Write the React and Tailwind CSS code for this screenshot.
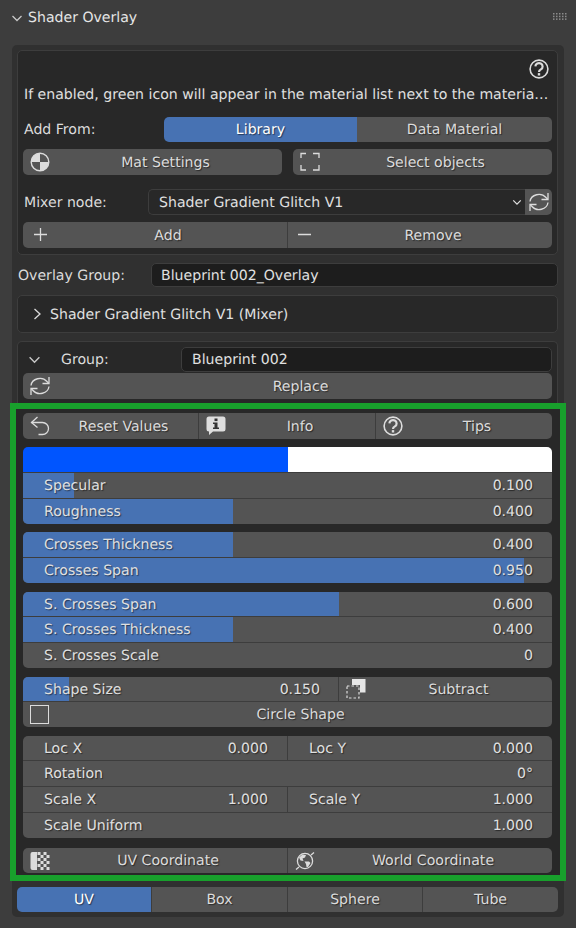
import React from "react";

const ICON = "#dcdcdc";

function Sphere() {
  return (
    <svg width="20" height="20" viewBox="0 0 20 20" className="shrink-0">
      <circle cx="10" cy="10" r="8.8" fill="#545454" stroke={ICON} strokeWidth="1.4" />
      <path d="M10 10V1.2A8.8 8.8 0 0 0 1.2 10Z" fill={ICON} />
      <path d="M10 10v8.8A8.8 8.8 0 0 0 18.8 10Z" fill={ICON} />
    </svg>
  );
}
function Select() {
  return (
    <svg width="20" height="20" viewBox="0 0 20 20" fill="none" stroke={ICON} strokeWidth="1.3" className="shrink-0">
      <path d="M1 6V1.5h5M13 1.5h6V6M1 13v5h5M13 18h6v-5" />
    </svg>
  );
}
function Refresh() {
  return (
    <svg width="20" height="20" viewBox="0 0 20 20" fill="none" stroke={ICON} strokeWidth="1.3" className="shrink-0">
      <path d="M1 9.5A9 8 0 0 1 17 5.5L18.5 7" />
      <path d="M19 1V7.5H12.5" />
      <path d="M19 10.5A9 8 0 0 1 3 14.5L1.5 13" />
      <path d="M1 19V12.5H7.5" />
    </svg>
  );
}
function Undo() {
  return (
    <svg width="20" height="20" viewBox="0 0 20 20" fill="none" stroke={ICON} strokeWidth="1.3" className="shrink-0">
      <path d="M7.5 1L1.5 6.5L7.5 11.5" />
      <path d="M1.5 6.5H12.5A6 6 0 0 1 12.5 18.5H8.5" />
    </svg>
  );
}
function Info() {
  return (
    <svg width="20" height="20" viewBox="0 0 20 20" className="shrink-0">
      <path d="M3 0.5H17A2.5 2.5 0 0 1 19.5 3V13A2.5 2.5 0 0 1 17 15.5H7L3 19V15.5A2.5 2.5 0 0 1 0.5 13V3A2.5 2.5 0 0 1 3 0.5Z" fill="#dedede" />
      <rect x="8.5" y="2.5" width="3" height="2.6" fill="#333" />
      <path d="M7 6.5H11.5V11.5H13V13H7V11.5H8.5V8H7Z" fill="#333" />
    </svg>
  );
}
function Help() {
  return (
    <svg width="20" height="20" viewBox="0 0 20 20" fill="none" stroke={ICON} className="shrink-0">
      <circle cx="10" cy="10" r="8.9" strokeWidth="1.6" />
      <path d="M6.4 7.4A3.6 3.4 0 1 1 11.9 10.4C10.7 11.1 10 11.6 10 12.9" strokeWidth="2.2" />
      <rect x="8.8" y="14.1" width="2.4" height="2.4" fill={ICON} stroke="none" />
    </svg>
  );
}
function Subtract() {
  return (
    <svg width="20" height="20" viewBox="0 0 20 20" fill="none" className="shrink-0">
      <path d="M6 0H19.5V13.5H14V6H6Z" fill="#e6e6e6" />
      <rect x="1" y="7" width="12" height="12" stroke={ICON} strokeWidth="1.2" strokeDasharray="2.5 2" />
    </svg>
  );
}
function UvIcon() {
  const cells = [];
  for (let r = 0; r < 6; r++) {
    for (let c = 0; c < 4; c++) {
      if ((r + c) % 2 === 0) cells.push(<rect key={r + "-" + c} x={7.5 + c * 3} y={1 + r * 3} width="3" height="3" fill={ICON} />);
    }
  }
  return (
    <svg width="20" height="20" viewBox="0 0 20 20" className="shrink-0">
      <path d="M2.5 1H7V19H2.5A2 2 0 0 1 0.5 17V3A2 2 0 0 1 2.5 1Z" fill={ICON} />
      {cells}
    </svg>
  );
}
function World() {
  return (
    <svg width="20" height="20" viewBox="0 0 20 20" fill="none" className="shrink-0">
      <circle cx="10" cy="10" r="7.6" stroke={ICON} strokeWidth="1.3" />
      <path d="M4 6.5L7.5 3.5L11 4L10 6.5L7.5 7.5L8.5 10L5.5 9.5Z" fill={ICON} />
      <path d="M9.5 10.5L14 10.5L15.5 12L13 16L11.5 16L11 13Z" fill={ICON} />
      <path d="M1 18.5L4 16M16 4L19 1.5" stroke={ICON} strokeWidth="1.3" />
    </svg>
  );
}
function Chevron({ dir = "down", w = 12, h = 12, color = "#c8c8c8", sw = 1.3 }) {
  const d = dir === "down" ? "M1.5 4L6 8.5L10.5 4" : "M3.5 1L9 6L3.5 11";
  return (
    <svg width={w} height={h} viewBox="0 0 12 12" fill="none" stroke={color} strokeWidth={sw} className="shrink-0">
      <path d={d} />
    </svg>
  );
}
function Grip() {
  const dots = [];
  for (let y = 0; y < 3; y++) for (let x = 0; x < 5; x++) dots.push(<rect key={x + "-" + y} x={x * 3} y={y * 2.7} width="1.5" height="1.5" fill="#8c8c8c" />);
  return (
    <svg width="14" height="7" viewBox="0 0 14 7" className="shrink-0">
      {dots}
    </svg>
  );
}

const shadow = "[text-shadow:1px_1px_1px_rgba(0,0,0,0.5)]";

function Btn({ icon, active, children, className = "", iconClass = "top-[3px]" }) {
  return (
    <div
      className={
        "relative flex items-center justify-center " +
        (active ? "bg-[#4772b3] text-white " : "bg-[#545454] text-[#dcdcdc] ") +
        (icon ? "pl-[26px] " : "") +
        shadow + " " + className
      }
    >
      {icon && <span className={"absolute left-[7px] flex " + iconClass}>{icon}</span>}
      <span className="pt-[2px]">{children}</span>
    </div>
  );
}

function Slider({ label, value, fill = "", className = "" }) {
  return (
    <div className={"relative flex items-center justify-between pl-[21px] pr-[19px] bg-[#545454] text-[#e0e0e0] " + shadow + " " + className}>
      {fill && <div className={"absolute left-0 top-0 bottom-0 bg-[#4772b3] " + fill} />}
      <span className="relative pt-[2px]">{label}</span>
      <span className="relative pt-[2px]">{value}</span>
    </div>
  );
}

function Sep() {
  return <div className="h-px bg-[#3d3d3d] shrink-0" />;
}

export default function App() {
  return (
    <div className="w-[576px] h-[928px] overflow-hidden bg-[#3d3d3d] text-[14.1px] leading-none text-[#dcdcdc] font-['DejaVu_Sans',sans-serif] [text-rendering:geometricPrecision]">
      {/* header */}
      <div className="h-[45px] flex items-center pl-[11px] pr-[9px] pb-[10px]">
        <Chevron w={12} h={12} color="#c8c8c8" />
        <span className="ml-[5px] pt-[2px] text-[#e6e6e6]">Shader Overlay</span>
        <span className="ml-auto -mt-[3px] flex"><Grip /></span>
      </div>

      {/* panel */}
      <div className="ml-[12px] w-[552px] h-[872px] rounded-[5px] bg-[#303030] pl-[5px] pr-[6px] pt-[5px]">
        {/* box 1 */}
        <div className="h-[205px] rounded-[5px] border border-[#3d3d3d] bg-[#282828] px-[5px] flex flex-col">
          <div className="flex justify-end pt-[8px] pr-[3px] h-[36px]"><Help /></div>
          <div className="h-[21px] -mt-[2px] flex items-center pl-px whitespace-nowrap overflow-hidden text-[#e0e0e0]">
            If enabled, green icon will appear in the material list next to the materia…
          </div>
          <div className="flex mt-[11px] h-[25px]">
            <div className="w-[141px] pl-px pt-[2px] flex items-center text-[#dcdcdc]">Add From:</div>
            <Btn active className="w-[193px] rounded-l-[5px]">Library</Btn>
            <Btn className="flex-1 rounded-r-[5px]">Data Material</Btn>
          </div>
          <div className="flex mt-[7px] h-[26px] gap-[11px]">
            <Btn icon={<Sphere />} className="flex-1 rounded-[5px]">Mat Settings</Btn>
            <Btn icon={<Select />} className="flex-1 rounded-[5px]">Select objects</Btn>
          </div>
          <div className="flex mt-[14px] h-[26px]">
            <div className="w-[125px] pl-px pt-[2px] flex items-center">Mixer node:</div>
            <div className="flex-1 flex items-center justify-between pl-[10px] pr-[3px] bg-[#282828] border border-[#3d3d3d] border-r-0 rounded-l-[5px] text-[#e0e0e0]">
              <span className="pt-[2px]">Shader Gradient Glitch V1</span>
              <Chevron w={10} h={10} color="#e0e0e0" sw={1.5} />
            </div>
            <div className="w-[27px] flex items-center justify-center bg-[#545454] rounded-r-[5px]"><Refresh /></div>
          </div>
          <div className="flex mt-[7px] h-[26px] rounded-[5px] overflow-hidden">
            <Btn className="w-[265px] border-r border-[#3d3d3d]" icon={
              <svg width="13" height="13" viewBox="0 0 13 13" stroke="#dcdcdc" strokeWidth="1.3" className="ml-[4px] mt-[3px]"><path d="M6.5 0V13M0 6.5H13" /></svg>
            }>Add</Btn>
            <Btn className="flex-1" icon={
              <svg width="13" height="13" viewBox="0 0 13 13" stroke="#dcdcdc" strokeWidth="1.3" className="ml-[3px] mt-[3px]"><path d="M0 6.5H13" /></svg>
            }>Remove</Btn>
          </div>
        </div>

        {/* overlay group */}
        <div className="flex items-center mt-[8px] h-[24px]">
          <div className="w-[134px] pl-px pt-[2px]">Overlay Group:</div>
          <div className="flex-1 h-full flex items-center pl-[9px] pt-[2px] bg-[#1d1d1d] border border-[#3d3d3d] rounded-[5px] text-[#e0e0e0]">Blueprint 002_Overlay</div>
        </div>

        {/* collapsed */}
        <div className="mt-[8px] h-[38px] flex items-center pl-[13px] rounded-[5px] border border-[#3d3d3d] bg-[#282828] text-[#e0e0e0]">
          <Chevron dir="right" w={12} h={12} color="#dcdcdc" />
          <span className="ml-[7px] pt-[2px]">Shader Gradient Glitch V1 (Mixer)</span>
        </div>

        {/* box 2 */}
        <div className="mt-[8px] h-[62px] rounded-t-[5px] border border-b-0 border-[#3d3d3d] bg-[#282828] px-[5px] pt-[5px]">
          <div className="flex items-center h-[25px]">
            <span className="ml-[5px] flex"><Chevron w={13} h={13} color="#c8c8c8" /></span>
            <span className="ml-[20px] w-[120px] pt-[2px]">Group:</span>
            <div className="flex-1 h-full flex items-center pl-[10px] pt-[2px] bg-[#1d1d1d] border border-[#3d3d3d] rounded-[5px] text-[#e0e0e0]">Blueprint 002</div>
          </div>
          <Btn icon={<Refresh />} className="h-[26px] rounded-[5px] mt-px">Replace</Btn>
        </div>

        {/* highlighted section */}
        <div className="-ml-[7px] -mr-[8px] h-[478px] border-[6px] border-[#18a02c] bg-[#282828] pl-[7px] pr-[8px] pt-[4px] flex flex-col">
          <div className="flex h-[26px] rounded-[5px] overflow-hidden shrink-0">
            <Btn icon={<Undo />} className="w-[176px] border-r border-[#3d3d3d]">Reset Values</Btn>
            <Btn icon={<Info />} className="w-[177px] border-r border-[#3d3d3d]">Info</Btn>
            <Btn icon={<Help />} className="flex-1">Tips</Btn>
          </div>

          <div className="mt-[8px] rounded-[5px] overflow-hidden flex flex-col shrink-0">
            <div className="flex h-[25px]">
              <div className="w-[265px] bg-[#0055ff]" />
              <div className="flex-1 bg-white" />
            </div>
            <Sep />
            <Slider className="h-[25px]" label="Specular" value="0.100" fill="w-[51px]" />
            <Sep />
            <Slider className="h-[25px]" label="Roughness" value="0.400" fill="w-[210px]" />
          </div>

          <div className="mt-[8px] rounded-[5px] overflow-hidden flex flex-col shrink-0">
            <Slider className="h-[25px]" label="Crosses Thickness" value="0.400" fill="w-[210px]" />
            <Sep />
            <Slider className="h-[25px]" label="Crosses Span" value="0.950" fill="w-[501px]" />
          </div>

          <div className="mt-[9px] rounded-[5px] overflow-hidden flex flex-col shrink-0">
            <Slider className="h-[24px] pt-px" label="S. Crosses Span" value="0.600" fill="w-[316px]" />
            <Sep />
            <Slider className="h-[25px]" label="S. Crosses Thickness" value="0.400" fill="w-[210px]" />
            <Sep />
            <Slider className="h-[25px]" label="S. Crosses Scale" value="0" />
          </div>

          <div className="mt-[9px] rounded-[5px] overflow-hidden flex flex-col shrink-0">
            <div className="flex h-[24px]">
              <Slider className="w-[316px] border-r border-[#3d3d3d] !pr-[18px] pt-px" label="Shape Size" value="0.150" fill="w-[46px]" />
              <Btn icon={<Subtract />} iconClass="top-[2px]" className="flex-1 pt-px">Subtract</Btn>
            </div>
            <Sep />
            <div className="relative h-[25px] flex items-center justify-center pl-[26px] bg-[#545454] text-[#dcdcdc]">
              <span className={"pt-[2px] " + shadow}>Circle Shape</span>
              <div className="absolute left-[7px] top-[3px] w-[19px] h-[19px] border-[1.5px] border-[#dcdcdc]" />
            </div>
          </div>

          <div className="mt-[9px] rounded-[5px] overflow-hidden flex flex-col shrink-0">
            <div className="flex h-[24px]">
              <Slider className="w-[265px] border-r border-[#3d3d3d] pt-px" label="Loc X" value="0.000" />
              <Slider className="flex-1 pt-px" label="Loc Y" value="0.000" />
            </div>
            <Sep />
            <Slider className="h-[25px]" label="Rotation" value="0°" />
            <Sep />
            <div className="flex h-[25px]">
              <Slider className="w-[265px] border-r border-[#3d3d3d]" label="Scale X" value="1.000" />
              <Slider className="flex-1" label="Scale Y" value="1.000" />
            </div>
            <Sep />
            <Slider className="h-[25px]" label="Scale Uniform" value="1.000" />
          </div>

          <div className="mt-[10px] flex h-[25px] rounded-[5px] overflow-hidden shrink-0">
            <Btn icon={<UvIcon />} className="w-[265px] border-r border-[#3d3d3d]">UV Coordinate</Btn>
            <Btn icon={<World />} className="flex-1">World Coordinate</Btn>
          </div>
        </div>

        {/* tabs */}
        <div className="mt-[6px] flex h-[25px] rounded-[5px] overflow-hidden">
          <Btn active className="w-[135px] border-r border-[#3d3d3d]">UV</Btn>
          <Btn className="w-[136px] border-r border-[#3d3d3d]">Box</Btn>
          <Btn className="w-[135px] border-r border-[#3d3d3d]">Sphere</Btn>
          <Btn className="flex-1">Tube</Btn>
        </div>
      </div>
    </div>
  );
}
